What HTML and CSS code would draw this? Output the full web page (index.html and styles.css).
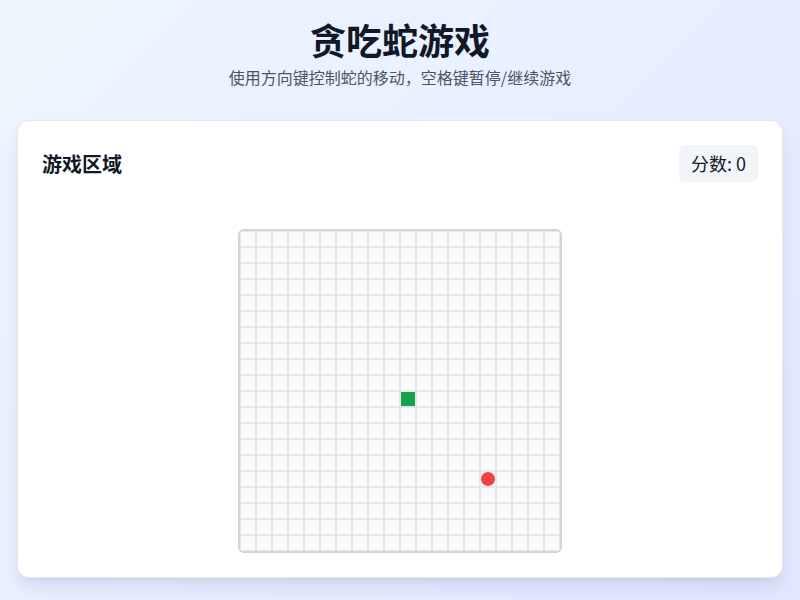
FILE: index.html
```html
<!DOCTYPE html>
<html lang="zh-CN">
<head>
<meta charset="utf-8">
<title>贪吃蛇游戏</title>
<link rel="stylesheet" href="styles.css">
</head>
<body>
<div class="page">
  <header class="top">
    <h1 class="title">贪吃蛇游戏</h1>
    <p class="subtitle">使用方向键控制蛇的移动，空格键暂停/继续游戏</p>
  </header>

  <!-- game card -->
  <div class="card">
    <div class="card-header">
      <h2 class="card-title">游戏区域</h2>
      <div class="score">分数: <span id="score">0</span></div>
    </div>
    <div class="board-wrap">
      <div class="board" id="board"></div>
    </div>
  </div>
</div>

<script>
var SIZE = 20;
var snake = [{x: 10, y: 10}];
var food = {x: 15, y: 15};
var board = document.getElementById("board");

function draw() {
  var html = "";
  for (var y = 0; y < SIZE; y++) {
    for (var x = 0; x < SIZE; x++) {
      var cls = "cell";
      var inner = "";
      for (var i = 0; i < snake.length; i++) {
        if (snake[i].x == x && snake[i].y == y) cls += " snake";
      }
      if (food.x == x && food.y == y) inner = "<span class=\"food\"></span>";
      html += "<div class=\"" + cls + "\">" + inner + "</div>";
    }
  }
  board.innerHTML = html;
}
draw();
</script>
</body>
</html>
```

FILE: styles.css
```css
* {
  box-sizing: border-box;
}

body {
  margin: 0;
  min-height: 600px;
  font-family: "Noto Sans CJK SC", "Noto Sans", sans-serif;
  background: linear-gradient(135deg, #eff6ff 0%, #e0e7ff 100%);
  color: #111827;
}

.page {
  padding: 18px 17px 0;
}

.top {
  text-align: center;
}

.title {
  margin: 0;
  font-size: 36px;
  line-height: 43px;
  font-weight: 700;
  color: #111827;
}

.subtitle {
  margin: 4px 0 0;
  font-size: 16px;
  line-height: 24px;
  color: #4b5563;
}

.card {
  margin-top: 31px;
  background: #fff;
  border: 1px solid #e5e7eb;
  border-radius: 12px;
  padding: 24px 24px 24px;
  box-shadow: 0 10px 20px -4px rgba(30, 41, 99, 0.12), 0 4px 8px -4px rgba(30, 41, 99, 0.08);
}

.card-header {
  display: flex;
  justify-content: space-between;
  align-items: center;
}

.card-title {
  margin: 0;
  font-size: 20px;
  line-height: 28px;
  font-weight: 700;
  color: #111827;
}

.score {
  background: #f1f5f9;
  border-radius: 6px;
  padding: 6px 12px;
  font-size: 18px;
  line-height: 25px;
  color: #111827;
}

.board-wrap {
  display: flex;
  justify-content: center;
  margin-top: 47px;
}

.board {
  display: grid;
  grid-template-columns: repeat(20, 16px);
  grid-template-rows: repeat(20, 16px);
  border: 2px solid #d1d5db;
  border-radius: 6px;
  overflow: hidden;
  background: #f9fafb;
}

.cell {
  border: 1px solid #e5e7eb;
  background: #f9fafb;
  display: flex;
  align-items: center;
  justify-content: center;
}

.cell.snake {
  background: #16a34a;
}

.food {
  width: 14px;
  height: 14px;
  border-radius: 50%;
  background: #ef4444;
}
```
